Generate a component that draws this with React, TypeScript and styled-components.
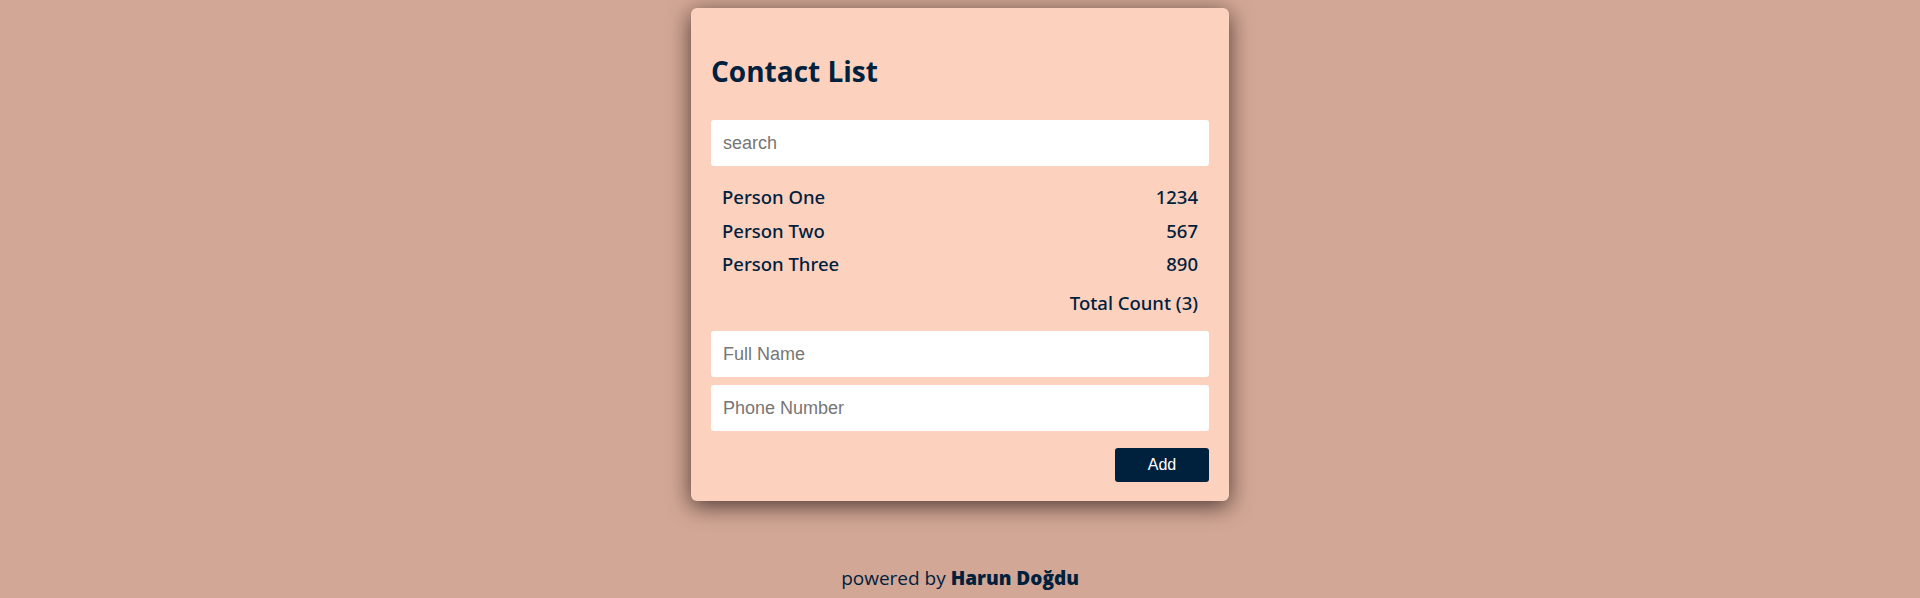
import React, { useState } from "react";
import styled, { createGlobalStyle } from "styled-components";

const GlobalStyle = createGlobalStyle`
    html, body {
        margin: 0;
        padding: 0;
        background-color: #d2a795;
        font-family: "Open Sans", "Noto Sans", sans-serif;
        color: #00213d;
    }
    * {
        box-sizing: border-box;
    }
`;

const Page = styled.div`
    display: flex;
    flex-direction: column;
    align-items: center;
    min-height: 598px;
    padding-top: 8px;
`;

const Card = styled.div`
    width: 538px;
    padding: 20px 20px 19px;
    background-color: #fcd2bf;
    border-radius: 6px;
    box-shadow: 0 5px 22px rgba(20, 10, 10, 0.7);
    h1 {
        margin: 24px 0 30px;
        font-size: 28px;
        line-height: 38px;
        font-weight: 700;
    }
`;

const Input = styled.input`
    display: block;
    width: 100%;
    height: 46px;
    padding: 0 12px;
    border: none;
    border-radius: 3px;
    background-color: #ffffff;
    font-family: "Liberation Sans", Arial, sans-serif;
    font-size: 18px;
    color: #00213d;
    outline: none;
    &::placeholder {
        color: #767676;
    }
`;

const List = styled.ul`
    list-style: none;
    margin: 14px 0 0;
    padding: 0 11px 0 11px;
`;

const Row = styled.li<{ $total?: boolean }>`
    display: flex;
    justify-content: ${(p) => (p.$total ? "flex-end" : "space-between")};
    height: 33.5px;
    line-height: 33.5px;
    margin-top: ${(p) => (p.$total ? "5px" : "0")};
    font-family: "Noto Sans", "Open Sans", sans-serif;
    font-size: 18.5px;
    font-weight: 500;
`;

const Form = styled.div`
    display: flex;
    flex-direction: column;
    gap: 8px;
    margin-top: 12px;
`;

const Actions = styled.div`
    display: flex;
    justify-content: flex-end;
    margin-top: 17px;
`;

const AddButton = styled.button`
    width: 94px;
    height: 34px;
    border: none;
    border-radius: 3px;
    background-color: #00213d;
    color: #ffffff;
    font-family: "Liberation Sans", Arial, sans-serif;
    font-size: 16px;
    cursor: pointer;
`;

const Footer = styled.footer`
    margin-top: 63px;
    font-size: 19px;
    line-height: 28px;
    b {
        font-weight: 800;
    }
`;

const contacts = [
    { name: "Person One", phone: "1234" },
    { name: "Person Two", phone: "567" },
    { name: "Person Three", phone: "890" },
];

const App = (): JSX.Element => {
    const [search, setSearch] = useState("");
    const filtered = contacts.filter((c) =>
        c.name.toLowerCase().includes(search.toLowerCase())
    );
    return (
        <Page>
            <GlobalStyle />
            <Card>
                <h1>Contact List</h1>
                <Input
                    placeholder="search"
                    value={search}
                    onChange={(e) => setSearch(e.target.value)}
                />
                <List>
                    {filtered.map((c) => (
                        <Row key={c.name}>
                            <span>{c.name}</span>
                            <span>{c.phone}</span>
                        </Row>
                    ))}
                    <Row $total>Total Count ({filtered.length})</Row>
                </List>
                <Form>
                    <Input placeholder="Full Name" />
                    <Input placeholder="Phone Number" />
                </Form>
                <Actions>
                    <AddButton>Add</AddButton>
                </Actions>
            </Card>
            <Footer>
                powered by <b>Harun Doğdu</b>
            </Footer>
        </Page>
    );
};

export default App;
